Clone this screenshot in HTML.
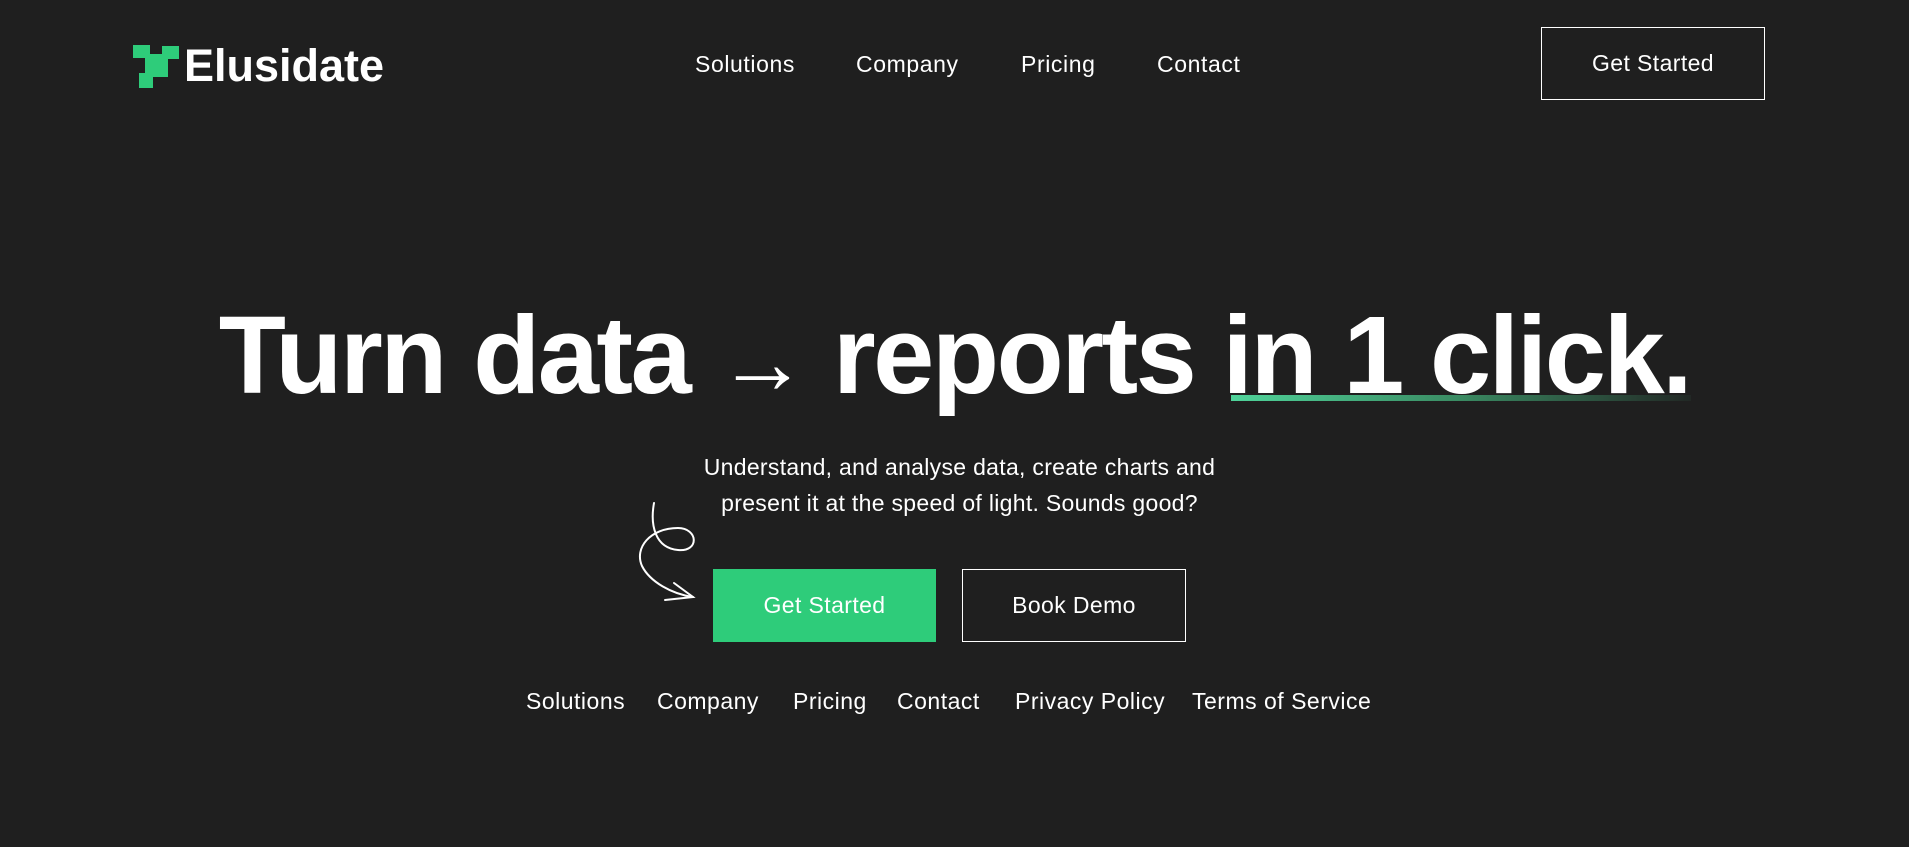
<!DOCTYPE html>
<html><head><meta charset="utf-8"><style>
*{margin:0;padding:0;box-sizing:border-box}
body{width:1909px;height:847px;background:#1f1f1f;color:#fff;font-family:"Liberation Sans",sans-serif;position:relative;overflow:hidden}
.a{position:absolute;white-space:nowrap}
.nav{font-size:23px;top:51px;letter-spacing:0.6px}
.btn{position:absolute;display:flex;align-items:center;justify-content:center;font-size:23px;letter-spacing:0.4px}
.f{font-size:23px;top:688px;letter-spacing:0.5px}
</style></head><body>
<svg class="a" style="left:133px;top:45px" width="46" height="43" viewBox="0 0 46 43">
<g fill="#2ecc7a"><rect x="0" y="0" width="17" height="13"/><rect x="29" y="1" width="17" height="13"/><rect x="12" y="9" width="23" height="23"/><rect x="6" y="28" width="14" height="15"/></g></svg>
<div class="a" style="left:184px;top:40px;font-size:45px;font-weight:bold;letter-spacing:0px">Elusidate</div>
<div class="a nav" style="left:695px">Solutions</div>
<div class="a nav" style="left:856px">Company</div>
<div class="a nav" style="left:1021px">Pricing</div>
<div class="a nav" style="left:1157px">Contact</div>
<div class="btn" style="left:1541px;top:27px;width:224px;height:73px;border:1px solid #fff">Get Started</div>
<div class="a" style="left:0;width:1909px;text-align:center;top:292px;font-size:110px;font-weight:bold;letter-spacing:-2.5px;padding-left:0px">Turn data <span style="font-size:90px">→</span> reports in 1 click.</div>
<div class="a" style="left:1231px;top:395px;width:460px;height:6px;background:linear-gradient(90deg,#4fd39a,#3a8a62 50%,rgba(40,60,50,0.3))"></div>
<div class="a" style="left:0;width:1909px;text-align:center;top:449px;font-size:23px;line-height:36px;padding-left:10px;letter-spacing:0.3px">Understand, and analyse data, create charts and<br>present it at the speed of light. Sounds good?</div>
<svg class="a" style="left:0;top:0" width="1909" height="847"><g fill="none" stroke="#fff" stroke-width="2" stroke-linecap="round">
<path d="M654,503 C650,525 655,548 678,550 C700,552 698,528 678,528 C650,528 634,548 642,566 C650,582 672,594 693,597"/>
<path d="M674,583 L693,597 L665,600"/></g></svg>
<div class="btn" style="left:713px;top:569px;width:223px;height:73px;background:#2ecc7a">Get Started</div>
<div class="btn" style="left:962px;top:569px;width:224px;height:73px;border:1px solid #fff">Book Demo</div>
<div class="a f" style="left:526px">Solutions</div>
<div class="a f" style="left:657px">Company</div>
<div class="a f" style="left:793px">Pricing</div>
<div class="a f" style="left:897px">Contact</div>
<div class="a f" style="left:1015px">Privacy Policy</div>
<div class="a f" style="left:1192px">Terms of Service</div>
</body></html>
